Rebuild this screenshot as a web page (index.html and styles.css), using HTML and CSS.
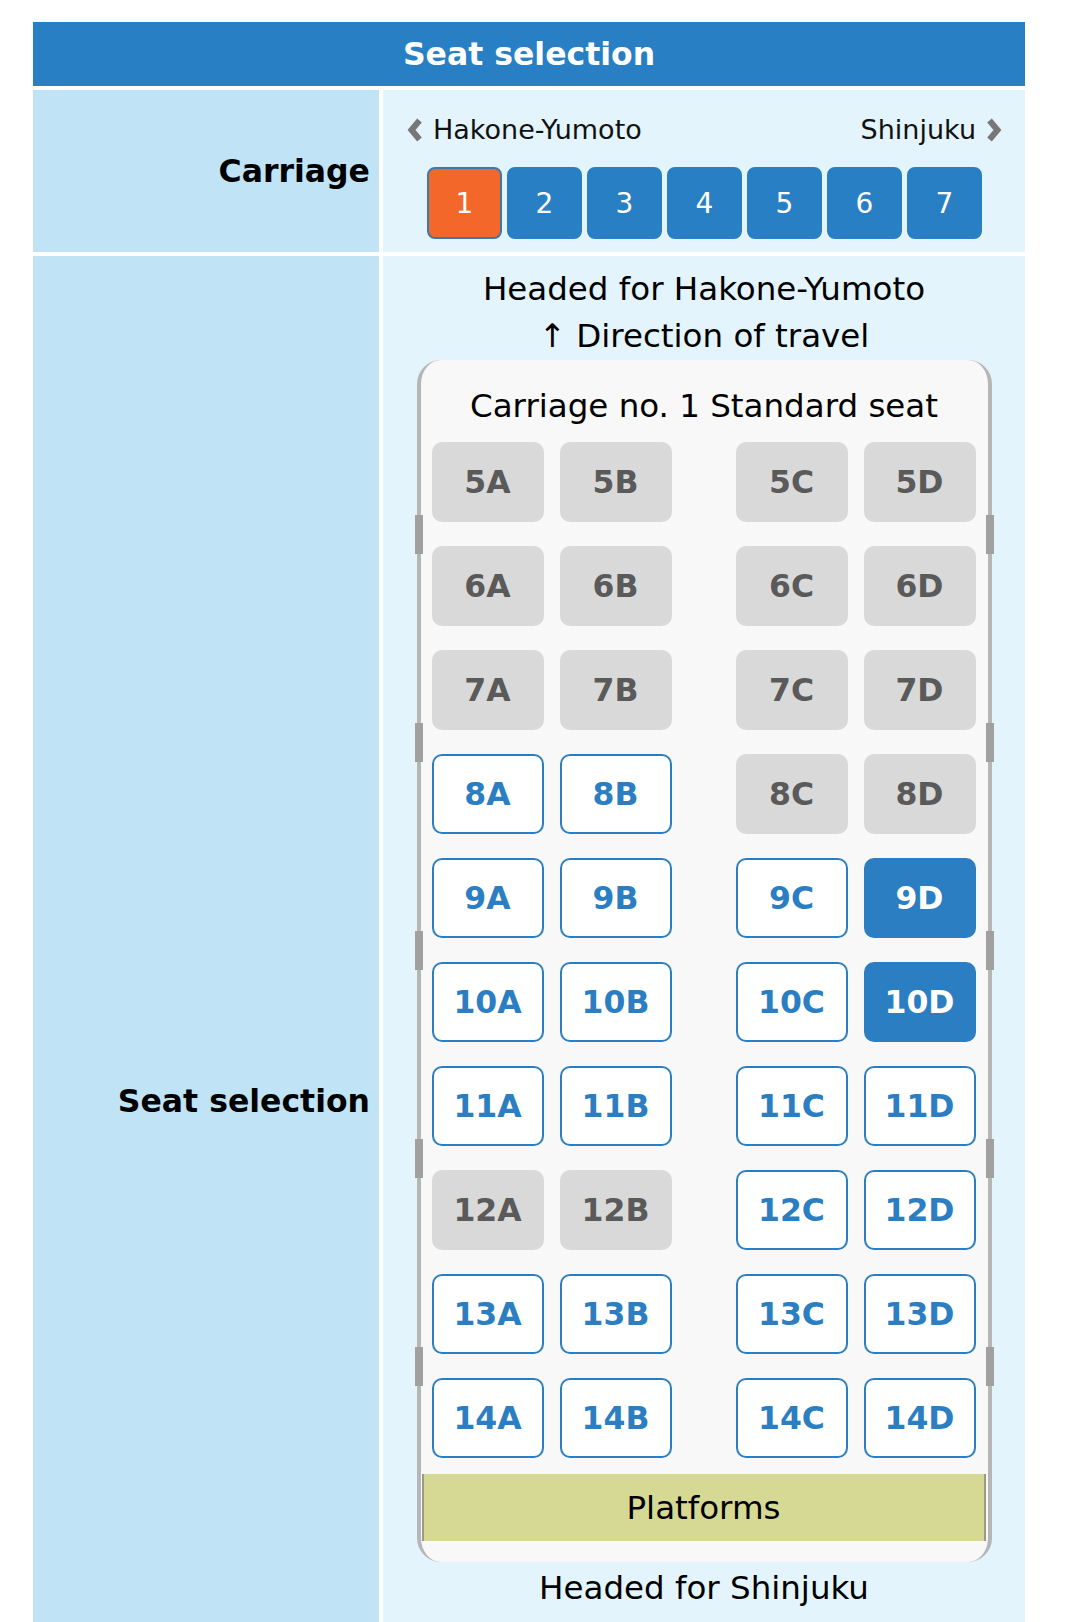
FILE: index.html
```html
<!DOCTYPE html>
<html lang="en">
<head>
<meta charset="utf-8">
<title>Seat selection</title>
<link rel="stylesheet" href="styles.css">
</head>
<body>
<div class="page">
  <div class="title">Seat selection</div>

  <div class="label label-carriage">Carriage</div>
  <div class="cell cell-carriage">
    <div class="nav">
      <span class="nav-item">
        <svg class="chev" viewBox="0 0 16 26" width="16" height="26"><polyline points="12.5,3.5 4.5,13 12.5,22.5" fill="none" stroke="#777" stroke-width="6" stroke-linejoin="miter"/></svg>
        Hakone-Yumoto
      </span>
      <span class="nav-item">
        Shinjuku
        <svg class="chev" viewBox="0 0 16 26" width="16" height="26"><polyline points="3.5,3.5 11.5,13 3.5,22.5" fill="none" stroke="#777" stroke-width="6" stroke-linejoin="miter"/></svg>
      </span>
    </div>
    <div class="cars">
      <span class="car car-on">1</span>
      <span class="car">2</span>
      <span class="car">3</span>
      <span class="car">4</span>
      <span class="car">5</span>
      <span class="car">6</span>
      <span class="car">7</span>
    </div>
  </div>

  <div class="label label-seat">Seat selection</div>
  <div class="cell cell-seat">
    <div class="dir">Headed for Hakone-Yumoto</div>
    <div class="dir">↑ Direction of travel</div>
    <div class="coach">
      <span class="door door-l" style="top:155px"></span>
      <span class="door door-l" style="top:363px"></span>
      <span class="door door-l" style="top:571px"></span>
      <span class="door door-l" style="top:779px"></span>
      <span class="door door-l" style="top:987px"></span>
      <span class="door door-r" style="top:155px"></span>
      <span class="door door-r" style="top:363px"></span>
      <span class="door door-r" style="top:571px"></span>
      <span class="door door-r" style="top:779px"></span>
      <span class="door door-r" style="top:987px"></span>
      <div class="coach-title">Carriage no. 1 Standard seat</div>
      <div class="seats">
        <div class="row"><div class="pair"><span class="seat taken">5A</span><span class="seat taken">5B</span></div><div class="pair"><span class="seat taken">5C</span><span class="seat taken">5D</span></div></div>
        <div class="row"><div class="pair"><span class="seat taken">6A</span><span class="seat taken">6B</span></div><div class="pair"><span class="seat taken">6C</span><span class="seat taken">6D</span></div></div>
        <div class="row"><div class="pair"><span class="seat taken">7A</span><span class="seat taken">7B</span></div><div class="pair"><span class="seat taken">7C</span><span class="seat taken">7D</span></div></div>
        <div class="row"><div class="pair"><span class="seat free">8A</span><span class="seat free">8B</span></div><div class="pair"><span class="seat taken">8C</span><span class="seat taken">8D</span></div></div>
        <div class="row"><div class="pair"><span class="seat free">9A</span><span class="seat free">9B</span></div><div class="pair"><span class="seat free">9C</span><span class="seat chosen">9D</span></div></div>
        <div class="row"><div class="pair"><span class="seat free">10A</span><span class="seat free">10B</span></div><div class="pair"><span class="seat free">10C</span><span class="seat chosen">10D</span></div></div>
        <div class="row"><div class="pair"><span class="seat free">11A</span><span class="seat free">11B</span></div><div class="pair"><span class="seat free">11C</span><span class="seat free">11D</span></div></div>
        <div class="row"><div class="pair"><span class="seat taken">12A</span><span class="seat taken">12B</span></div><div class="pair"><span class="seat free">12C</span><span class="seat free">12D</span></div></div>
        <div class="row"><div class="pair"><span class="seat free">13A</span><span class="seat free">13B</span></div><div class="pair"><span class="seat free">13C</span><span class="seat free">13D</span></div></div>
        <div class="row"><div class="pair"><span class="seat free">14A</span><span class="seat free">14B</span></div><div class="pair"><span class="seat free">14C</span><span class="seat free">14D</span></div></div>
      </div>
      <div class="platform">Platforms</div>
    </div>
    <div class="dir dir-end">Headed for Shinjuku</div>
  </div>
</div>
</body>
</html>
```

FILE: styles.css
```css
* { box-sizing: border-box; }

html, body {
  margin: 0;
  padding: 0;
  background: #ffffff;
}

body {
  font-family: "DejaVu Sans", Verdana, sans-serif;
  color: #111111;
}

.page {
  margin: 22px 0 0 33px;
  width: 992px;
  display: grid;
  grid-template-columns: 346px 642px;
  gap: 4px;
}

.title {
  grid-column: 1 / 3;
  height: 64px;
  background: #287fc3;
  color: #ffffff;
  font-weight: bold;
  font-size: 31.5px;
  display: flex;
  align-items: center;
  justify-content: center;
}

.label {
  background: #c0e4f6;
  font-weight: bold;
  font-size: 31.5px;
  color: #000000;
  text-align: right;
  padding-right: 9px;
}

.label-carriage {
  display: flex;
  align-items: center;
  justify-content: flex-end;
}

.label-seat {
  padding-top: 822px;
  line-height: 46px;
}

.cell {
  background: #e3f4fc;
}

.cell-carriage {
  padding: 21px 23px 13px 24px;
}

.nav {
  display: flex;
  justify-content: space-between;
  align-items: center;
  font-size: 27px;
  line-height: 38px;
  height: 38px;
}

.nav-item {
  display: flex;
  align-items: center;
  gap: 10px;
}

.chev {
  display: block;
}

.cars {
  margin-top: 18px;
  display: flex;
  justify-content: center;
  gap: 5px;
}

.car {
  width: 75px;
  height: 72px;
  border-radius: 8px;
  background: #287fc3;
  border: 2px solid #287fc3;
  color: #ffffff;
  font-size: 28px;
  display: flex;
  align-items: center;
  justify-content: center;
}

.car-on {
  background: #f4672a;
  border-color: #3f77aa;
}

.cell-seat {
  padding: 10px 0 12px;
  display: flex;
  flex-direction: column;
  align-items: center;
}

.dir {
  font-size: 32.5px;
  line-height: 47px;
  color: #000000;
}

.dir-end {
  margin-top: 3px;
}

.coach {
  position: relative;
  width: 575px;
  background: #f8f8f8;
  border-left: 4px solid #b6b6b6;
  border-right: 4px solid #b6b6b6;
  border-radius: 24px;
  padding: 23px 0 21px;
}

.door {
  position: absolute;
  width: 8px;
  height: 39px;
  background: #a0a0a0;
}

.door-l { left: -6px; }
.door-r { right: -6px; }

.coach-title {
  text-align: center;
  font-size: 32.5px;
  line-height: 46px;
  color: #000000;
}

.seats {
  margin-top: 13px;
  padding: 0 12px 0 11px;
  display: grid;
  row-gap: 24px;
}

.row {
  display: flex;
  justify-content: space-between;
}

.pair {
  display: flex;
  gap: 16px;
}

.seat {
  width: 112px;
  height: 80px;
  border-radius: 10px;
  font-weight: bold;
  font-size: 31.5px;
  display: flex;
  align-items: center;
  justify-content: center;
}

.taken {
  background: #d9d9d9;
  color: #5a5a5a;
}

.free {
  background: #ffffff;
  border: 2px solid #2a7ec1;
  color: #2a7ec1;
}

.chosen {
  background: #2a7ec1;
  color: #ffffff;
}

.platform {
  margin: 16px 2px 0 1px;
  height: 67px;
  background: #d6d993;
  border-left: 2px solid #9a9a86;
  border-right: 2px solid #9a9a86;
  font-size: 32.5px;
  color: #000000;
  display: flex;
  align-items: center;
  justify-content: center;
}
```
